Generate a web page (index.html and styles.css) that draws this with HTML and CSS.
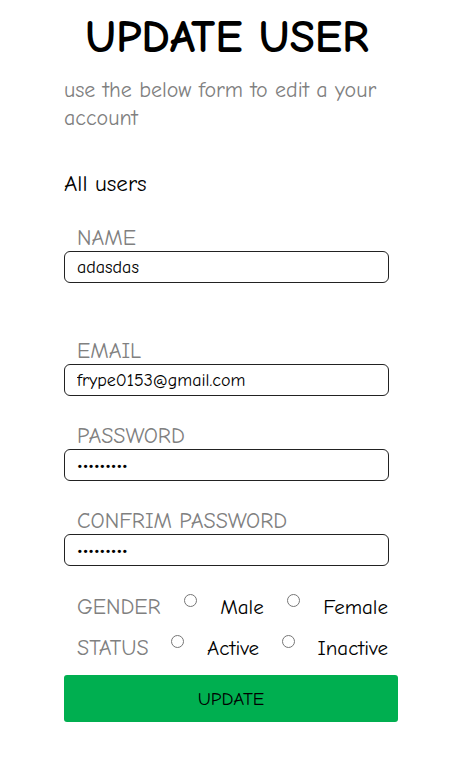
FILE: index.html
```html
<!DOCTYPE html>
<html>
<head>
<meta charset="utf-8">
<link rel="stylesheet" href="styles.css">
</head>
<body>
<div class="page">
  <h1 class="title">UPDATE USER</h1>
  <p class="subtitle">use the below form to edit a your account</p>
  <div class="all-users">All users</div>
  <form class="form">
    <div class="field field-gap">
      <label class="label">NAME</label>
      <input class="input" type="text" value="adasdas">
    </div>
    <div class="field">
      <label class="label">EMAIL</label>
      <input class="input" type="text" value="frype0153@gmail.com">
    </div>
    <div class="field">
      <label class="label">PASSWORD</label>
      <input class="input" type="password" value="123456789">
    </div>
    <div class="field">
      <label class="label">CONFRIM PASSWORD</label>
      <input class="input" type="password" value="123456789">
    </div>
    <div class="choice-row">
      <span class="label">GENDER</span>
      <input class="radio" type="radio" name="gender">
      <span class="choice">Male</span>
      <input class="radio" type="radio" name="gender">
      <span class="choice">Female</span>
    </div>
    <div class="choice-row choice-row-2">
      <span class="label">STATUS</span>
      <input class="radio" type="radio" name="status">
      <span class="choice">Active</span>
      <input class="radio" type="radio" name="status">
      <span class="choice">Inactive</span>
    </div>
    <button class="button" type="button">UPDATE</button>
  </form>
</div>
</body>
</html>
```
FILE: styles.css
```css
* { box-sizing: border-box; }
html, body { margin: 0; padding: 0; background: #fff; }
body {
  font-family: "Comic Sans MS", "Comic Neue", "DejaVu Sans", sans-serif;
  color: #000;
}
.page {
  width: 334px;
  margin-left: 64px;
  padding-top: 14px;
}
.title {
  margin: 0 0 0 -64px;
  width: 454px;
  text-align: center;
  font-size: 46px;
  line-height: 48px;
  font-weight: bold;
}
.subtitle {
  margin: 14px 0 0 0;
  font-size: 22px;
  line-height: 28px;
  color: #808080;
}
.all-users {
  margin-top: 38px;
  font-size: 23px;
  line-height: 28px;
}
.form {
  margin-top: 27px;
  display: flex;
  flex-direction: column;
}
.field {
  display: flex;
  flex-direction: column;
  margin-bottom: 27px;
}
.field-gap { margin-bottom: 55px; }
.label {
  padding-left: 13px;
  font-size: 22px;
  line-height: 26px;
  color: #808080;
}
.input {
  width: 325px;
  height: 32px;
  border: 1px solid #222;
  border-radius: 6px;
  padding: 0 12px;
  font-family: inherit;
  font-size: 18px;
  color: #000;
  outline: none;
}
.field:last-of-type { margin-bottom: 25px; }
.choice-row {
  display: flex;
  align-items: flex-start;
  justify-content: space-between;
  width: 324px;
  height: 28px;
}
.choice-row .label { padding-left: 13px; line-height: 28px; }
.choice-row-2 { margin-top: 13px; }
.radio {
  margin: 0;
  width: 13px;
  height: 13px;
  margin-top: 1px;
}
.choice {
  font-size: 21px;
  line-height: 28px;
}
.button {
  margin-top: 13px;
  width: 334px;
  height: 47px;
  background: #00af50;
  border: none;
  border-radius: 3px;
  font-family: inherit;
  font-size: 19px;
  color: #000;
}
```
